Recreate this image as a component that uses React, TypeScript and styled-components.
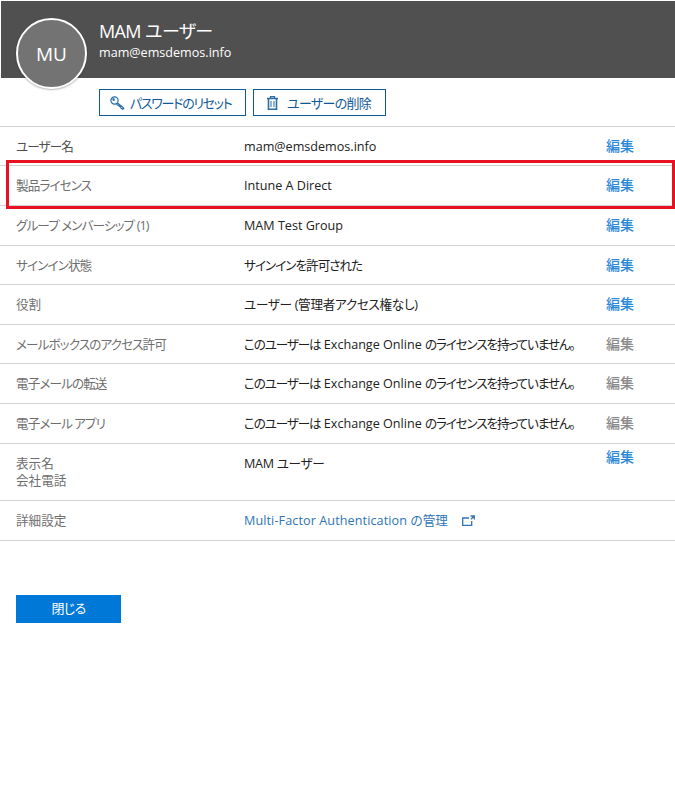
import styled, { createGlobalStyle } from "styled-components";

const GlobalStyle = createGlobalStyle`
  html, body {
    margin: 0;
    padding: 0;
    background: #fff;
  }
  body {
    font-family: "Open Sans", "Noto Sans CJK JP", sans-serif;
    font-size: 12.6px;
    font-feature-settings: "palt";
    color: #212121;
  }
`;

const Page = styled.div`
  position: relative;
  width: 675px;
  height: 812px;
  overflow: hidden;
`;

const Banner = styled.header`
  position: relative;
  height: 77px;
  margin: 1px 0 0 1px;
  background: #505050;
  color: #fff;
  padding: 18px 0 0 98px;
  box-sizing: border-box;
`;

const Avatar = styled.div`
  position: absolute;
  left: 15px;
  top: 17px;
  width: 71px;
  height: 71px;
  box-sizing: border-box;
  border-radius: 50%;
  border: 2px solid #fff;
  box-shadow: 0 1px 2px rgba(0, 0, 0, 0.3);
  background: #737373;
  color: #fff;
  font-size: 19px;
  display: flex;
  align-items: center;
  justify-content: center;
`;

const UserName = styled.div`
  font-size: 18px;
  line-height: 24px;
  letter-spacing: -0.6px;
`;

const UserMail = styled.div`
  font-size: 12.6px;
  line-height: 20px;
`;

const Toolbar = styled.div`
  display: flex;
  gap: 7px;
  padding: 11px 0 0 99px;
  height: 48px;
  box-sizing: border-box;
`;

const ToolButton = styled.button<{ $w: number; $track: number; $pad: number; $gap: number }>`
  display: flex;
  align-items: center;
  gap: ${(p) => p.$gap}px;
  height: 27px;
  width: ${(p) => p.$w}px;
  padding: 0 0 0 ${(p) => p.$pad}px;
  border: 1px solid #0f5a96;
  background: #fff;
  color: #0f5a96;
  font-family: inherit;
  font-feature-settings: inherit;
  font-size: 13px;
  letter-spacing: ${(p) => p.$track}px;
  white-space: nowrap;
`;

const Rows = styled.div`
  border-top: 1px solid #d2d2d2;
`;

const Row = styled.div<{ $h: number }>`
  display: grid;
  grid-template-columns: 228px 362px 1fr;
  height: ${(p) => p.$h}px;
  box-sizing: border-box;
  padding: 10px 0 0 16px;
  border-bottom: 1px solid #d2d2d2;
  line-height: 20px;
`;

const Label = styled.div<{ $dark?: boolean; $kana?: boolean }>`
  color: ${(p) => (p.$dark ? "#505050" : "#6e6e6e")};
  letter-spacing: ${(p) => (p.$kana ? "-0.9px" : "0")};
  line-height: 17px;
  padding-top: 1px;
`;

const Value = styled.div<{ $track?: number }>`
  color: #212121;
  letter-spacing: ${(p) => p.$track ?? 0}px;
  white-space: pre;
`;

const Kana = styled.span`
  letter-spacing: -1.15px;
`;

const EditLink = styled.div<{ $off?: boolean; $up?: number }>`
  color: ${(p) => (p.$off ? "#8a8a8a" : "#2b88d8")};
  font-size: 14px;
  font-weight: 500;
  margin-top: ${(p) => p.$up ?? -1}px;
`;

const ExternalLink = styled.a`
  color: #2f75b5;
  display: inline-flex;
  align-items: center;
  align-self: start;
  gap: 14px;
  letter-spacing: 0.1px;
  text-decoration: none;
  white-space: nowrap;
  height: 20px;
`;

const CloseButton = styled.button`
  display: block;
  width: 105px;
  height: 28px;
  margin: 54px 0 0 16px;
  padding: 0 0 3px;
  border: 0;
  background: #0078d7;
  color: #fff;
  font-family: inherit;
  font-feature-settings: inherit;
  font-size: 13px;
  letter-spacing: -0.7px;
`;

const Highlight = styled.div`
  position: absolute;
  left: 6px;
  top: 160px;
  width: 669px;
  height: 49px;
  box-sizing: border-box;
  border: 3px solid #e81123;
  pointer-events: none;
`;

const KeyIcon = () => (
  <svg width="15" height="14" viewBox="0 0 15 14" fill="none" stroke="#2a6ea8" strokeWidth="1.2">
    <circle cx="4.5" cy="4.5" r="3.6" />
    <circle cx="3.6" cy="3.6" r="0.7" />
    <path d="M7.2 6.8l6.6 5.2-1 1.4-2-1.4-.2-1.4-1.4-.2-.3-1.2-1.3-.1-1.2-1.4" />
  </svg>
);

const TrashIcon = () => (
  <svg width="11" height="14" viewBox="0 0 11 14" fill="none" stroke="#2a6ea8" strokeWidth="1.3">
    <path d="M0 2.5h11M3.5 2.5V.7h4v1.8" />
    <path d="M1.5 2.5v10.8h8V2.5" strokeWidth="1.6" />
    <path d="M4 5v6M7 5v6" strokeWidth="1" />
  </svg>
);

const OpenIcon = () => (
  <svg width="13" height="12" viewBox="0 0 13 12" fill="none" stroke="#2f75b5" strokeWidth="1.3">
    <path d="M7 3H.7v7.3h9V6M8.5 1h3.8v3.5M12 1.2L9 4.2" />
  </svg>
);

const noLicence = (
  <>
    <Kana>このユーザーは</Kana> Exchange Online <Kana>のライセンスを持っていません。</Kana>
  </>
);

const rows = [
  { label: "ユーザー名", value: "mam@emsdemos.info", h: 39, dark: true },
  { label: "製品ライセンス", value: "Intune A Direct", h: 40 },
  { label: "グループ メンバーシップ (1)", value: "MAM Test Group", h: 40 },
  { label: "サインイン状態", value: "サインインを許可された", h: 39, track: -1 },
  { label: "役割", value: "ユーザー (管理者アクセス権なし)", h: 40, track: -0.3, kanji: true },
  { label: "メールボックスのアクセス許可", value: noLicence, h: 39, disabled: true },
  { label: "電子メールの転送", value: noLicence, h: 40, disabled: true },
  { label: "電子メール アプリ", value: noLicence, h: 40, disabled: true },
];

export default function App() {
  return (
    <Page>
      <GlobalStyle />
      <Banner>
        <Avatar>MU</Avatar>
        <UserName>MAM ユーザー</UserName>
        <UserMail>mam@emsdemos.info</UserMail>
      </Banner>
      <Toolbar>
        <ToolButton $w={147} $track={-1.3} $pad={10} $gap={5}>
          <KeyIcon />
          パスワードのリセット
        </ToolButton>
        <ToolButton $w={133} $track={-0.7} $pad={13} $gap={9}>
          <TrashIcon />
          ユーザーの削除
        </ToolButton>
      </Toolbar>
      <Rows>
        {rows.map((r) => (
          <Row key={r.label} $h={r.h}>
            <Label $dark={r.dark} $kana={!r.kanji}>
              {r.label}
            </Label>
            <Value $track={r.track}>{r.value}</Value>
            <EditLink $off={r.disabled}>編集</EditLink>
          </Row>
        ))}
        <Row $h={57}>
          <Label>
            表示名
            <br />
            会社電話
          </Label>
          <Value $track={-0.3}>MAM ユーザー</Value>
          <EditLink $up={-7}>編集</EditLink>
        </Row>
        <Row $h={40}>
          <Label>詳細設定</Label>
          <ExternalLink href="#">
            Multi-Factor Authentication の管理
            <OpenIcon />
          </ExternalLink>
        </Row>
      </Rows>
      <CloseButton>閉じる</CloseButton>
      <Highlight />
    </Page>
  );
}
